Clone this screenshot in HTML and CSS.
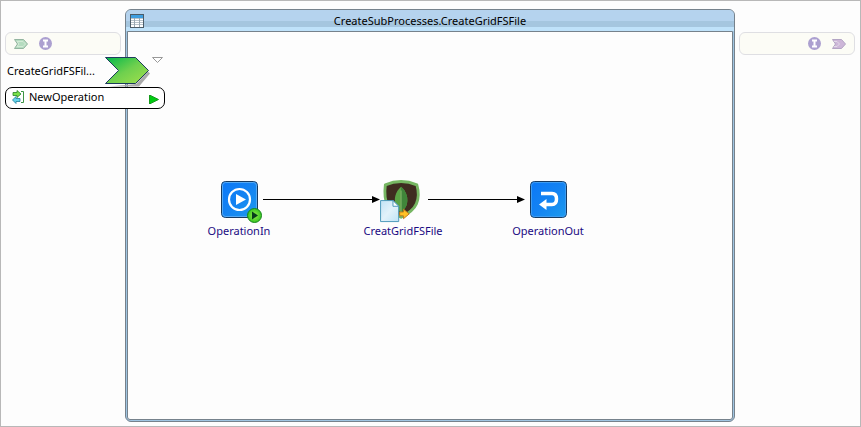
FILE: index.html
```
<!DOCTYPE html>
<html lang="en">
<head>
    <meta charset="UTF-8">
    <meta name="viewport" content="width=device-width, initial-scale=1.0">
    <title>CreateSubProcesses.CreateGridFSFile</title>
    <link rel="stylesheet" href="styles.css">
</head>
<body>
    <div class="editor">
        <!-- Provided services -->
        <aside class="lane">
            <div class="lane-bar">
                <button type="button" class="tool" aria-label="Add service">
                    <svg width="16" height="12" viewBox="0 0 16 12">
                        <path d="M1.5 1.5h9l4 4.5-4 4.5h-9l3-4.5z" fill="#b5dcc0" stroke="#94b5a0"/>
                        <path d="M4 3.5h6l2.5 2.5-2.5 2.5H4L6 6z" fill="none" stroke="#d3ead6"/>
                    </svg>
                </button>
                <button type="button" class="tool" aria-label="Add interface">
                    <svg width="13" height="13" viewBox="0 0 13 13">
                        <circle cx="6.5" cy="6.5" r="6.5" fill="#aca0d0"/>
                        <path d="M4 2.5h5v2H7.5v4H9v2H4v-2h1.500v-4H4z" fill="#fff"/>
                    </svg>
                </button>
            </div>
            <div class="service">
                <div class="service-head">
                    <span class="service-name">CreateGridFSFil...</span>
                    <svg class="service-arrow" width="46" height="31" viewBox="0 0 46 31">
                        <defs>
                            <linearGradient id="green" x1="0" y1="0" x2="1" y2="1">
                                <stop offset="0" stop-color="#00b84a"/>
                                <stop offset=".5" stop-color="#6fd04e"/>
                                <stop offset="1" stop-color="#a4e04c"/>
                            </linearGradient>
                        </defs>
                        <path d="M4 29.5h30l11-13-2-2L31 27z" fill="#aaa"/>
                        <path d="M.5.5h30l13 13-13 13H.5l13-13z" fill="url(#green)" stroke="#1c3b5c"/>
                    </svg>
                    <svg class="service-toggle" width="11" height="7" viewBox="0 0 11 7">
                        <path d="M.5.5h10l-5 5z" fill="#fff" stroke="#999"/>
                    </svg>
                </div>
                <button type="button" class="operation">
                    <svg width="12" height="14" viewBox="0 0 12 14">
                        <path d="M1 2.5h4V.5L9 4 5 7.5v-2H1z" fill="#7be04a" stroke="#278327" stroke-width=".8"/>
                        <path d="M8 8.5H4v-2L.5 10 4 13.5v-2h4z" fill="#65d5ea" stroke="#207e9c" stroke-width=".8"/>
                        <path d="M9 1.5h2.5v11H9" fill="none" stroke="#3c9444"/>
                    </svg>
                    <span>NewOperation</span>
                    <svg class="operation-run" width="10" height="9" viewBox="0 0 10 9">
                        <path d="M.5 0l9 4.5-9 4.500z" fill="#0c1" stroke="#179a1c"/>
                    </svg>
                </button>
            </div>
        </aside>

        <!-- Process -->
        <main class="process">
            <header class="process-title">
                <svg class="process-icon" width="14" height="14" viewBox="0 0 14 14" shape-rendering="crispEdges">
                    <path d="M.5.5h13v13H.5z" fill="#fff" stroke="#4c5c68"/>
                    <path d="M1 1h12v3H1z" fill="#3e9ee0"/>
                    <path d="M1 4.5h12M1 6.5h12M1 8.5h12M1 10.5h12" stroke="#b8c3cb"/>
                    <path d="M4.5 4v9M9.5 4v9" stroke="#9aa8b2"/>
                </svg>
                <h1>CreateSubProcesses.CreateGridFSFile</h1>
            </header>
            <div class="canvas">
                <svg class="links" width="400" height="9" viewBox="0 0 400 9">
                    <path d="M0 4.5h110M165 4.5h90" stroke="#000" shape-rendering="crispEdges"/>
                    <path d="M109 1l8 3.5-8 3.5zM254 1l8 3.5-8 3.5z"/>
                </svg>

                <div class="node node-in">
                    <svg width="40" height="42" viewBox="0 0 40 42">
                        <defs>
                            <linearGradient id="blue" x1="0" y1="0" x2="1" y2="1">
                                <stop offset="0" stop-color="#0a78f8"/>
                                <stop offset=".5" stop-color="#1483f2"/>
                                <stop offset="1" stop-color="#1c9cee"/>
                            </linearGradient>
                            <radialGradient id="lime">
                                <stop offset="0" stop-color="#9cf04a"/>
                                <stop offset="1" stop-color="#35c522"/>
                            </radialGradient>
                        </defs>
                        <rect x="2.5" y=".5" width="36" height="36" rx="4" fill="url(#blue)" stroke="#163b62"/>
                        <rect x="3.5" y="1.5" width="34" height="34" rx="3" fill="none" stroke="#55aaf5"/>
                        <circle cx="20.5" cy="18.5" r="10.5" fill="none" stroke="#fff" stroke-width="2.2"/>
                        <path d="M17 13l10 5.5-10 5.5z" fill="#fff"/>
                        <circle cx="35.5" cy="34.5" r="7" fill="url(#lime)" stroke="#17851c"/>
                        <path d="M33 30.5l6 4-6 4z" fill="#073d1b"/>
                    </svg>
                    <span>OperationIn</span>
                </div>

                <div class="node node-file">
                    <svg width="52" height="44" viewBox="0 0 52 44">
                        <defs>
                            <linearGradient id="page" x1="0" y1="0" x2="1" y2="1">
                                <stop offset="0" stop-color="#c2e3f5"/>
                                <stop offset=".5" stop-color="#e2f2fa"/>
                                <stop offset="1" stop-color="#bfe3f6"/>
                            </linearGradient>
                        </defs>
                        <path d="M7.500 4Q24-3 40.500 4C42 9 43 17 40 24C37 31 30 35 24 38C12 33 5 24 7.500 4z" fill="#3f2c20" stroke="#76b662" stroke-width="3" stroke-linejoin="round"/>
                        <path d="M24 6C18 11 16 19 18.5 26Q21 31 24 34Q27 31 29.5 26C32 19 30 11 24 6z" fill="#5aa345"/>
                        <path d="M24 6v28Q27 31 29.5 26C32 19 30 11 24 6z" fill="#40853a"/>
                        <path d="M24 10v24" stroke="#86b66f"/>
                        <path d="M2.5 20.5h13l6 6v16h-19z" fill="url(#page)" stroke="#4896b8"/>
                        <path d="M15.500 20.500v6h6z" fill="#fff" stroke="#4896b8"/>
                        <path d="M22.5 32.5h4v-3l6 5-6 5v-3h-4z" fill="#ffc125" stroke="#bd7c22"/>
                    </svg>
                    <span>CreatGridFSFile</span>
                </div>

                <div class="node node-out">
                    <svg width="40" height="42" viewBox="0 0 40 42">
                        <rect x="2.5" y=".5" width="36" height="36" rx="4" fill="url(#blue)" stroke="#163b62"/>
                        <rect x="3.5" y="1.5" width="34" height="34" rx="3" fill="none" stroke="#3d9cf2"/>
                        <path d="M13 12.5h11q4.500 0 4.500 5.500t-4.500 5.500h-7" fill="none" stroke="#fff" stroke-width="3.5"/>
                        <path d="M18.5 18v11L11 23.5z" fill="#fff"/>
                    </svg>
                    <span>OperationOut</span>
                </div>
            </div>
        </main>

        <!-- Invoked services -->
        <aside class="lane">
            <div class="lane-bar lane-bar-right">
                <button type="button" class="tool" aria-label="Add interface">
                    <svg width="13" height="13" viewBox="0 0 13 13">
                        <circle cx="6.5" cy="6.5" r="6.5" fill="#aca0d0"/>
                        <path d="M4 2.5h5v2H7.5v4H9v2H4v-2h1.500v-4H4z" fill="#fff"/>
                    </svg>
                </button>
                <button type="button" class="tool" aria-label="Add service">
                    <svg width="16" height="12" viewBox="0 0 16 12">
                        <path d="M1.5 1.5h9l4 4.5-4 4.5h-9l3-4.5z" fill="#cdb6d8" stroke="#b3a5c4"/>
                        <path d="M3 3.5h3l2.5 2.5-2.5 2.5H3" fill="none" stroke="#e3dbe9"/>
                    </svg>
                </button>
            </div>
        </aside>
    </div>
</body>
</html>
```
FILE: styles.css
```
* {
    margin: 0;
    padding: 0;
    box-sizing: border-box;
}
body {
    font-family: 'Noto Sans', 'Open Sans', sans-serif;
    font-size: 11px;
    line-height: 16px;
    color: #000;
    background: #fff;
}
button {
    font: inherit;
    color: inherit;
    border: none;
    background: none;
    cursor: pointer;
}
svg {
    display: block;
    flex-shrink: 0;
}
.editor {
    display: grid;
    grid-template-columns: 116px 1fr 116px;
    gap: 4px;
    min-height: 100vh;
    padding: 8px 5px 4px 4px;
    border: 1px solid #b8b8b8;
    background: #fdfdfd;
}
.lane {
    position: relative;
    padding-top: 23px;
}
.lane-bar {
    display: flex;
    align-items: center;
    gap: 10px;
    height: 23px;
    padding: 0 7px;
    border: 1px solid #dfdfe3;
    border-radius: 6px;
    background: #fcfcf6;
}
.lane-bar-right {
    justify-content: flex-end;
}

/* Service lies over the left edge of the process */
.service {
    position: absolute;
    top: 48px;
    left: 0;
    z-index: 1;
    width: 160px;
}
.service-head {
    display: flex;
    align-items: flex-start;
    height: 30px;
    padding-left: 2px;
}
.service-name {
    flex: 1;
    padding-top: 6px;
    white-space: nowrap;
}
.service-arrow {
    margin-right: 1px;
}
.service-toggle {
    margin-right: 2px;
}
.operation {
    display: flex;
    align-items: center;
    gap: 5px;
    width: 100%;
    height: 22px;
    padding: 0 5px 2px 6px;
    border: 1px solid #000;
    border-radius: 7px;
    background: #fff;
}
.operation-run {
    margin: 4px 0 0 auto;
}

.process {
    display: flex;
    flex-direction: column;
    padding: 0 1px 1px;
    border: 1px solid #76828c;
    border-radius: 6px;
    background: #9fc5e2;
    overflow: hidden;
}
.process-title {
    display: flex;
    align-items: center;
    height: 21px;
    margin: 0 -1px;
    padding: 0 4px;
    background: linear-gradient(#b5d3ee 11px, #a5c6df 11px, #a5c6df 17px, #bfe2fa 17px);
}
.process-title h1 {
    flex: 1;
    padding-right: 14px;
    font-size: 11px;
    font-weight: normal;
    text-align: center;
}
.canvas {
    position: relative;
    flex: 1;
    border: 1px solid #76828c;
    border-radius: 0 0 3px 3px;
    background: #fdfdfd;
}
.links {
    position: absolute;
    top: 163px;
    left: 135px;
}
.node {
    position: absolute;
    top: 149px;
    display: flex;
    flex-direction: column;
    align-items: center;
    width: 100px;
    color: #1a0a82;
}
.node svg {
    height: 42px;
    overflow: visible;
}
.node-in {
    left: 61px;
}
.node-file {
    left: 225px;
}
.node-out {
    left: 370px;
}
```
